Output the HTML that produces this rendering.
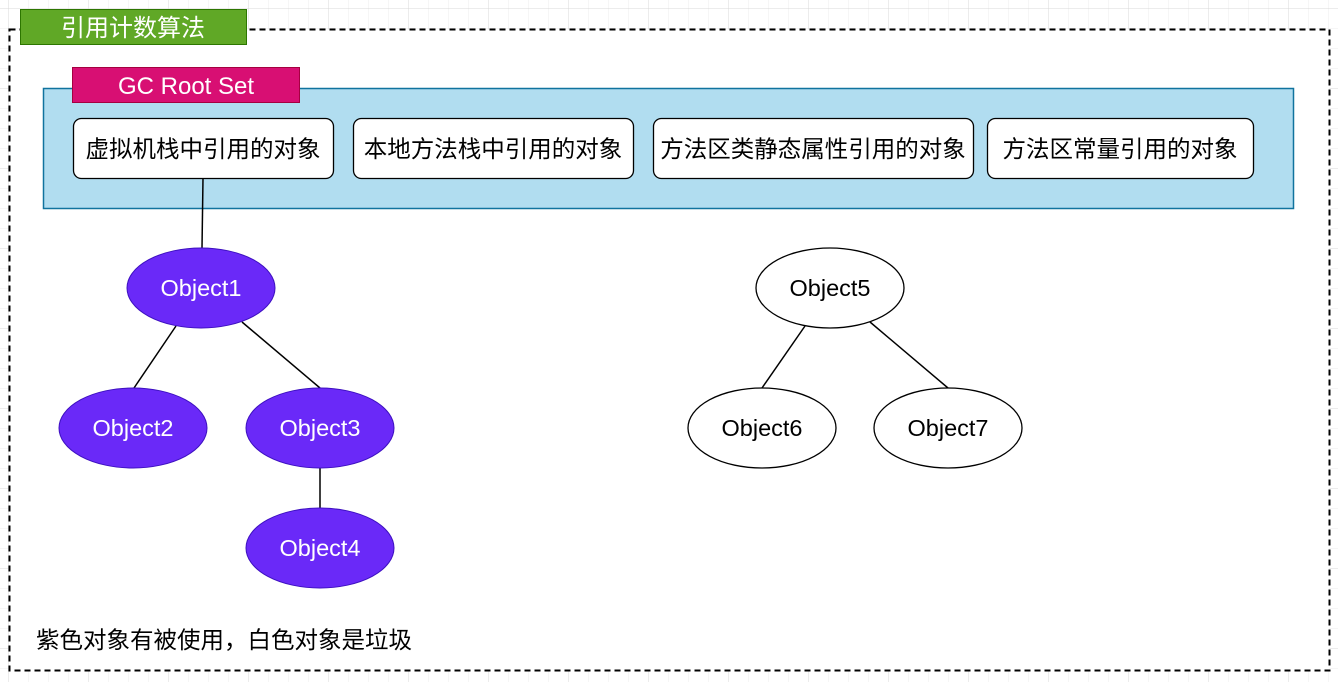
<!DOCTYPE html>
<html><head><meta charset="utf-8"><style>
html,body{margin:0;padding:0;background:#fff;}
svg{display:block;}
text{font-family:"Liberation Sans","Noto Sans CJK SC",sans-serif;}
</style></head><body>
<svg width="1338" height="682" xmlns="http://www.w3.org/2000/svg">
<defs>
<pattern id="g" x="8" y="8" width="20" height="20" patternUnits="userSpaceOnUse">
<path d="M0 0H20M0 0V20" stroke="#ececec" stroke-width="1" fill="none"/>
</pattern>
<pattern id="G" x="8" y="8" width="80" height="80" patternUnits="userSpaceOnUse">
<path d="M0 0H80M0 0V80" stroke="#d8d8d8" stroke-width="1" fill="none"/>
</pattern>
</defs>
<rect width="1338" height="682" fill="url(#g)"/>
<rect width="1338" height="682" fill="url(#G)"/>
<rect x="9.5" y="29.5" width="1320" height="641" fill="#fff" stroke="#000" stroke-width="2" stroke-dasharray="6 4"/>
<rect x="20.5" y="9.5" width="226" height="35" fill="#60a826" stroke="#2d7600"/>
<text x="133" y="36" font-size="24" fill="#fff" text-anchor="middle">引用计数算法</text>
<rect x="43.5" y="88.5" width="1250" height="120" fill="#b1ddf0" stroke="#10739e" stroke-width="1.5"/>
<rect x="72.5" y="67.5" width="227" height="35" fill="#d80f73" stroke="#a50040"/>
<text x="186" y="94" font-size="24" fill="#fff" text-anchor="middle">GC Root Set</text>
<g fill="#fff" stroke="#000" stroke-width="1.3">
<rect x="73.5" y="118.5" width="260" height="60" rx="8"/>
<rect x="353.5" y="118.5" width="280" height="60" rx="8"/>
<rect x="653.5" y="118.5" width="320" height="60" rx="8"/>
<rect x="987.5" y="118.5" width="266" height="60" rx="8"/>
</g>
<g font-size="23.5" fill="#000" text-anchor="middle">
<text x="203" y="157">虚拟机栈中引用的对象</text>
<text x="493" y="157">本地方法栈中引用的对象</text>
<text x="813" y="157">方法区类静态属性引用的对象</text>
<text x="1120" y="157">方法区常量引用的对象</text>
</g>
<g stroke="#000" stroke-width="1.5">
<line x1="203" y1="178" x2="202" y2="248"/>
<line x1="176" y1="326" x2="134" y2="388"/>
<line x1="242" y1="322" x2="320" y2="388"/>
<line x1="320" y1="468" x2="320" y2="508"/>
<line x1="805" y1="326" x2="762" y2="388"/>
<line x1="870" y1="322" x2="948" y2="388"/>
</g>
<g fill="#6a29f8" stroke="#3d10c0" stroke-width="1">
<ellipse cx="201" cy="288" rx="74" ry="40"/>
<ellipse cx="133" cy="428" rx="74" ry="40"/>
<ellipse cx="320" cy="428" rx="74" ry="40"/>
<ellipse cx="320" cy="548" rx="74" ry="40"/>
</g>
<g fill="#fff" stroke="#000" stroke-width="1.3">
<ellipse cx="830" cy="288" rx="74" ry="40"/>
<ellipse cx="762" cy="428" rx="74" ry="40"/>
<ellipse cx="948" cy="428" rx="74" ry="40"/>
</g>
<g font-size="23.5" text-anchor="middle">
<text x="201" y="296" fill="#fff">Object1</text>
<text x="133" y="436" fill="#fff">Object2</text>
<text x="320" y="436" fill="#fff">Object3</text>
<text x="320" y="556" fill="#fff">Object4</text>
<text x="830" y="296" fill="#000">Object5</text>
<text x="762" y="436" fill="#000">Object6</text>
<text x="948" y="436" fill="#000">Object7</text>
</g>
<text x="36" y="648" font-size="23.5" fill="#000">紫色对象有被使用，白色对象是垃圾</text>
</svg>
</body></html>
